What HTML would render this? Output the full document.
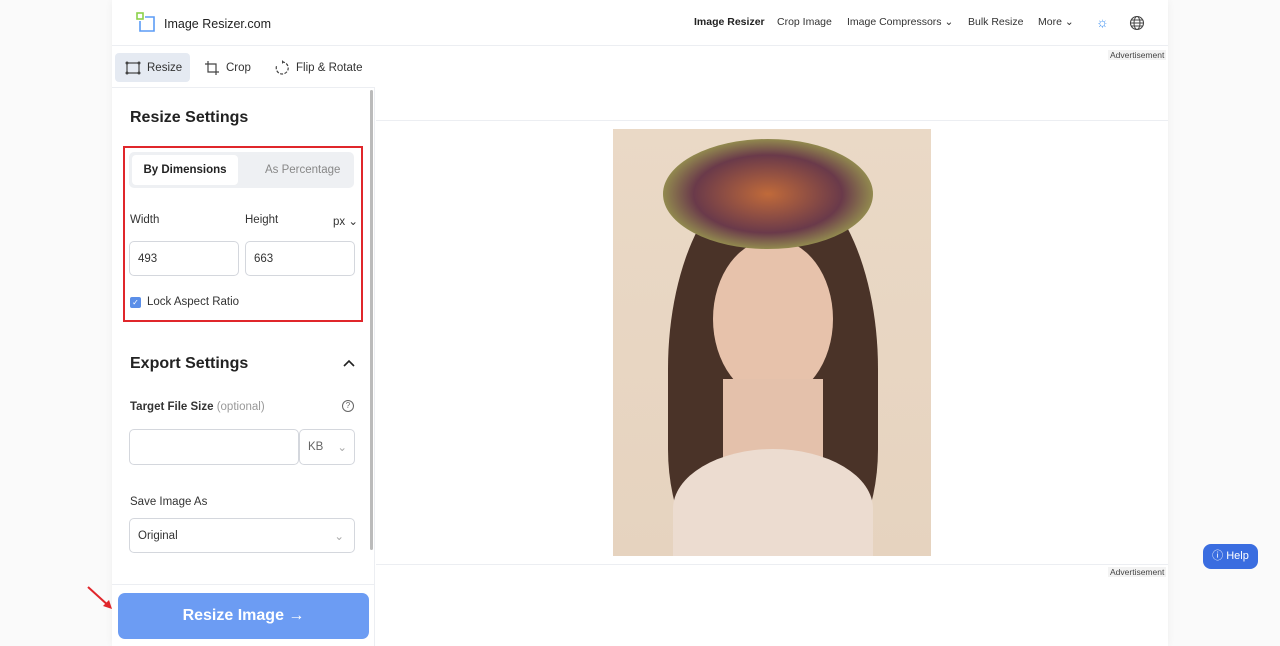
<!DOCTYPE html>
<html><head><meta charset="utf-8"><style>
*{box-sizing:border-box;margin:0;padding:0}
body{width:1280px;height:646px;background:#fafafa;font-family:"Liberation Sans",sans-serif;color:#222;position:relative;overflow:hidden}
.main{position:absolute;left:112px;top:0;width:1056px;height:646px;background:#fff;box-shadow:0 0 8px rgba(0,0,0,.05)}
.hdr{position:absolute;left:0;top:0;width:1056px;height:46px;border-bottom:1px solid #eceef2}
.nav{position:absolute;top:16px;font-size:10.5px;color:#333;white-space:nowrap}
.tabs{position:absolute;left:0;top:46px;width:263px;height:42px;border-bottom:1px solid #eceef2}
.tab{position:absolute;top:7px;height:29px;font-size:11.5px;color:#333;display:flex;align-items:center;gap:6px;padding:0 10px;white-space:nowrap}
.tab svg{flex:none}
.side{position:absolute;left:0;top:88px;width:263px;height:558px;border-right:1px solid #eceef2}
h2{position:absolute;font-size:16px;font-weight:bold;color:#222;white-space:nowrap}
.lbl{position:absolute;font-size:11.5px;color:#333;white-space:nowrap}
.inp{position:absolute;border:1px solid #d4d7dd;border-radius:5px;background:#fff;font-size:11.5px;color:#333;padding-left:8px;display:flex;align-items:center}
</style></head><body>
<div class="main">
 <div class="hdr">
  <svg style="position:absolute;left:24px;top:12px" width="20" height="20"><rect x="1" y="1" width="6" height="6" fill="none" stroke="#8bd14a" stroke-width="1.6"/><path d="M9 5H18V19H4V9" fill="none" stroke="#5b9cf5" stroke-width="1.6"/></svg>
  <div style="position:absolute;left:52px;top:17px;font-size:12.5px;color:#222">Image Resizer.com</div>
  <div class="nav" style="left:582px;font-weight:bold;color:#222">Image Resizer</div>
  <div class="nav" style="left:665px">Crop Image</div>
  <div class="nav" style="left:735px">Image Compressors ⌄</div>
  <div class="nav" style="left:856px">Bulk Resize</div>
  <div class="nav" style="left:926px">More ⌄</div>
  <div style="position:absolute;left:984px;top:14px;color:#3b8ef0;font-size:14px">☼</div>
  <svg style="position:absolute;left:1017px;top:15px" width="16" height="16"><circle cx="8" cy="8" r="6.5" fill="none" stroke="#444" stroke-width="1.1"/><ellipse cx="8" cy="8" rx="3" ry="6.5" fill="none" stroke="#444" stroke-width="1"/><path d="M1.5 8H14.5M2.5 5H13.5M2.5 11H13.5" stroke="#444" stroke-width="1"/></svg>
 </div>
 <div class="tabs">
  <div class="tab" style="left:3px;width:75px;background:#e5eaf2;border-radius:4px"><svg width="16" height="14"><rect x="2" y="2" width="12" height="10" fill="none" stroke="#444" stroke-width="1.2"/><g fill="#444"><circle cx="2" cy="2" r="1.5"/><circle cx="14" cy="2" r="1.5"/><circle cx="2" cy="12" r="1.5"/><circle cx="14" cy="12" r="1.5"/></g></svg>Resize</div>
  <div class="tab" style="left:82px"><svg width="16" height="16"><path d="M4 1V12H15M1 4H12V15" fill="none" stroke="#444" stroke-width="1.2"/></svg>Crop</div>
  <div class="tab" style="left:152px"><svg width="16" height="16"><path d="M8 2A6 6 0 1 1 3 5" fill="none" stroke="#444" stroke-width="1.2" stroke-dasharray="3 1.5"/><path d="M8 0V4L10 2Z" fill="#444"/></svg>Flip &amp; Rotate</div>
 </div>
 <div class="side">
  <div style="position:absolute;left:258px;top:2px;width:3px;height:460px;background:#bbb;border-radius:2px"></div>
  <h2 style="left:18px;top:21px">Resize Settings</h2>
  <div style="position:absolute;left:11px;top:58px;width:240px;height:176px;border:2px solid #e0262b"></div>
  <div style="position:absolute;left:17px;top:64px;width:225px;height:36px;background:#eef0f3;border-radius:5px"></div>
  <div style="position:absolute;left:20px;top:67px;width:106px;height:30px;background:#fff;border-radius:4px;font-size:11.5px;font-weight:bold;text-align:center;line-height:30px">By Dimensions</div>
  <div style="position:absolute;left:153px;top:76px;font-size:11.5px;color:#888">As Percentage</div>
  <div class="lbl" style="left:18px;top:126px">Width</div>
  <div class="lbl" style="left:133px;top:126px">Height</div>
  <div class="lbl" style="left:221px;top:126px">px ⌄</div>
  <div class="inp" style="left:17px;top:153px;width:110px;height:35px">493</div>
  <div class="inp" style="left:133px;top:153px;width:110px;height:35px">663</div>
  <div style="position:absolute;left:18px;top:209px;width:11px;height:11px;background:#5b8fe8;border-radius:2px;color:#fff;font-size:8px;text-align:center;line-height:11px">✓</div>
  <div class="lbl" style="left:35px;top:208px">Lock Aspect Ratio</div>
  <h2 style="left:18px;top:267px">Export Settings</h2>
  <svg style="position:absolute;left:230px;top:270px" width="14" height="10"><path d="M2 8L7 3L12 8" fill="none" stroke="#222" stroke-width="1.6"/></svg>
  <div class="lbl" style="left:18px;top:313px;font-weight:bold">Target File Size <span style="font-weight:normal;color:#999">(optional)</span></div>
  <div style="position:absolute;left:230px;top:312px;width:12px;height:12px;border:1px solid #666;border-radius:50%;font-size:8px;text-align:center;line-height:10px;color:#666">?</div>
  <div class="inp" style="left:17px;top:341px;width:170px;height:36px"></div>
  <div class="inp" style="left:187px;top:341px;width:56px;height:36px;color:#666">KB <span style="margin-left:14px;color:#aaa">⌄</span></div>
  <div class="lbl" style="left:18px;top:408px">Save Image As</div>
  <div class="inp" style="left:17px;top:430px;width:226px;height:35px">Original<span style="position:absolute;right:10px;color:#aaa">⌄</span></div>
  <div style="position:absolute;left:0;top:496px;width:262px;height:1px;background:#eceef2"></div>
  <div style="position:absolute;left:6px;top:505px;width:251px;height:46px;background:#6c9cf3;border-radius:7px;color:#fff;font-size:16px;font-weight:bold;text-align:center;line-height:46px">Resize Image →</div>
 </div>
 <div style="position:absolute;left:264px;top:120px;width:792px;height:1px;background:#eceef2"></div>
 <div style="position:absolute;left:264px;top:564px;width:792px;height:1px;background:#eceef2"></div>
 <div style="position:absolute;left:996px;top:50px;font-size:8.5px;color:#444;background:#f3f3f3;padding:0 2px">Advertisement</div>
 <div style="position:absolute;left:996px;top:567px;font-size:8.5px;color:#444;background:#f3f3f3;padding:0 2px">Advertisement</div>
 <div style="position:absolute;left:501px;top:129px;width:318px;height:427px;overflow:hidden;background:linear-gradient(#ead9c6,#e6d3bf)">
  <div style="position:absolute;left:55px;top:40px;width:210px;height:400px;border-radius:50% 50% 30% 30%;background:#4a3328"></div>
  <div style="position:absolute;left:100px;top:110px;width:120px;height:160px;border-radius:50%;background:#e7c2ab"></div>
  <div style="position:absolute;left:110px;top:250px;width:100px;height:180px;background:#e4c1ab"></div>
  <div style="position:absolute;left:60px;top:320px;width:200px;height:120px;border-radius:50% 50% 0 0;background:#ecdcd0"></div>
  <div style="position:absolute;left:50px;top:10px;width:210px;height:110px;border-radius:50%;background:radial-gradient(#c06a3a,#6a3a4a 50%,#9a9a50 75%,transparent 76%)"></div>
 </div>
</div>
<div style="position:absolute;left:1203px;top:544px;width:55px;height:25px;background:#3a6de0;border-radius:8px;color:#fff;font-size:11px;text-align:center;line-height:25px">ⓘ Help</div>
<svg style="position:absolute;left:86px;top:585px" width="30" height="28"><path d="M2 2L24 22" stroke="#e0262b" stroke-width="2"/><path d="M26 24L17 21L23 15Z" fill="#e0262b"/></svg>
</body></html>
